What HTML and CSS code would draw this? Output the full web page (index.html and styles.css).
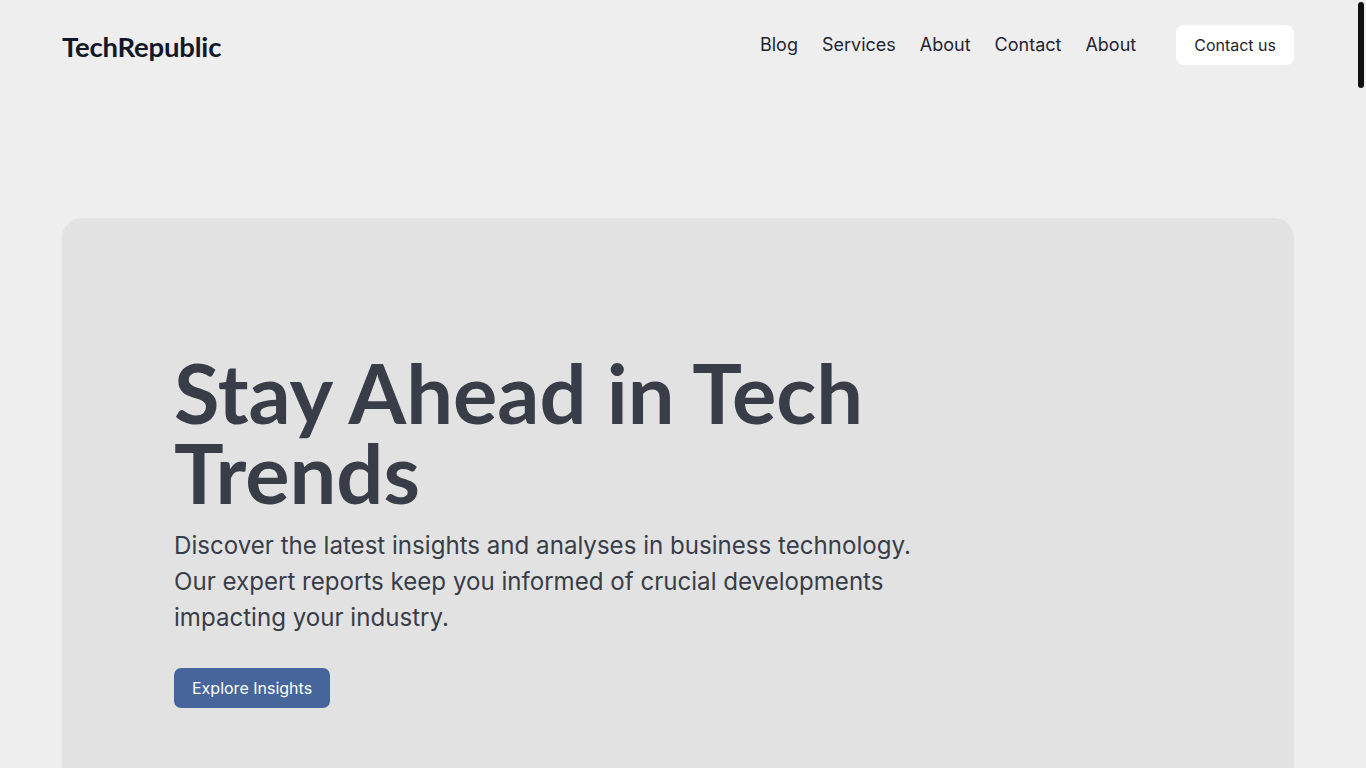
FILE: index.html
```html
<!DOCTYPE html>
<html lang="en">
<head>
<meta charset="utf-8">
<title>TechRepublic</title>
<link rel="stylesheet" href="styles.css">
</head>
<body>
<div class="page">
<div class="container">
  <header class="header">
    <a class="logo" href="#">TechRepublic</a>
    <nav class="nav">
      <a class="nav-link" href="#">Blog</a>
      <a class="nav-link" href="#">Services</a>
      <a class="nav-link" href="#">About</a>
      <a class="nav-link" href="#">Contact</a>
      <a class="nav-link" href="#">About</a>
      <a class="btn-contact" href="#">Contact us</a>
    </nav>
  </header>
  <main>
    <section class="hero">
      <h1 class="hero-title">Stay Ahead in Tech Trends</h1>
      <p class="hero-text">Discover the latest insights and analyses in business technology. Our expert reports keep you informed of crucial developments impacting your industry.</p>
      <a class="btn-primary" href="#">Explore Insights</a>
    </section>
    <section class="filler"></section>
  </main>
</div>
</div>
<div class="scrollbar" aria-hidden="true"><div class="scrollbar-thumb"></div></div>
</body>
</html>
```
FILE: styles.css
```css
*, *::before, *::after { box-sizing: border-box; }
html, body { margin: 0; background: #eeeeee; }
body {
  font-family: Inter, "Noto Sans", sans-serif;
  color: #111827;
}
.page {
  margin-right: 10px;
}
.scrollbar {
  position: fixed;
  top: 0;
  right: 0;
  width: 10px;
  height: 100vh;
  background: #eeeeee;
}
.scrollbar-thumb {
  margin: 2px 2px 0 2px;
  height: 86px;
  background: #111111;
  border-radius: 3px;
}
a { text-decoration: none; color: inherit; }
.container {
  max-width: 1280px;
  margin: 0 auto;
  padding: 0 24px;
}
.header {
  display: flex;
  align-items: center;
  justify-content: space-between;
  height: 90px;
}
.logo {
  font-family: Lato, Inter, sans-serif;
  font-weight: 700;
  font-size: 27.5px;
  color: #111827;
  letter-spacing: -0.2px;
  margin-top: 2px;
}
.nav {
  display: flex;
  align-items: center;
  gap: 24px;
  font-size: 18px;
  color: #1f2433;
}
.nav-link { margin-bottom: 2px; }
.btn-contact {
  margin-left: 16px;
  background: #ffffff;
  border-radius: 8px;
  padding: 0 18px;
  height: 40px;
  line-height: 40px;
  font-size: 16px;
  color: #1f2433;
}
.hero {
  margin-top: 128px;
  background: #e2e2e2;
  border-radius: 20px;
  padding: 134px 112px 200px;
}
.hero-title {
  margin: 0;
  font-family: Lato, Inter, sans-serif;
  font-weight: 700;
  font-size: 83px;
  line-height: 80px;
  color: #383d48;
  max-width: 760px;
}
.hero-text {
  margin: 16px 0 0;
  font-size: 24.1px;
  line-height: 36px;
  color: #383d48;
  max-width: 760px;
}
.btn-primary {
  display: inline-block;
  margin-top: 32px;
  background: #45659b;
  color: #ffffff;
  border-radius: 7px;
  padding: 0 18px;
  height: 40px;
  line-height: 40px;
  font-size: 16px;
}
.filler { height: 5600px; }
```
